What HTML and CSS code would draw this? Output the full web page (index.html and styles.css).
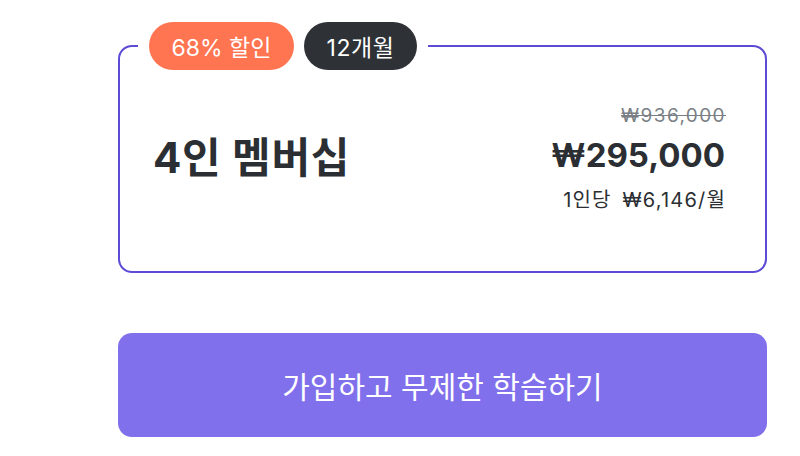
FILE: index.html
```html
<!DOCTYPE html>
<html lang="ko">
<head>
<meta charset="utf-8">
<link rel="stylesheet" href="styles.css">
</head>
<body>
<div class="wrap">
  <div class="card">
    <div class="badges">
      <span class="badge badge-sale">68% 할인</span>
      <span class="badge badge-term">12개월</span>
    </div>
    <div class="title">4인 멤버십</div>
    <div class="prices">
      <div class="orig">₩936,000</div>
      <div class="price">₩295,000</div>
      <div class="per">1인당 ₩6,146/월</div>
    </div>
  </div>
  <button class="cta">가입하고 무제한 학습하기</button>
</div>
</body>
</html>
```
FILE: styles.css
```css
html, body {
  margin: 0;
  padding: 0;
  background: #ffffff;
}
body {
  font-family: Inter, "Noto Sans CJK KR", sans-serif;
  color: #2b2f33;
}
.wrap {
  width: 649px;
  margin-left: 118px;
  padding-top: 45px;
}
.card {
  position: relative;
  box-sizing: border-box;
  height: 228px;
  border: 2px solid #5d4bd6;
  border-radius: 14px;
  display: flex;
  align-items: center;
  justify-content: space-between;
  padding: 0 40px 0 33px;
}
.badges {
  position: absolute;
  top: -25px;
  left: 18px;
  display: flex;
  gap: 10px;
  padding: 0 11px;
  background: #ffffff;
}
.badge {
  display: inline-flex;
  align-items: center;
  justify-content: center;
  height: 48px;
  border-radius: 24px;
  color: #ffffff;
  font-size: 23px;
  box-sizing: border-box;
}
.badge-sale {
  background: #ff7451;
  width: 145px;
}
.badge-term {
  background: #2e3236;
  width: 113px;
  letter-spacing: 0.6px;
}
.title {
  font-size: 42px;
  font-weight: 700;
  letter-spacing: 0.7px;
  line-height: 50px;
  margin-top: -2px;
}
.prices {
  display: flex;
  flex-direction: column;
  align-items: flex-end;
  margin-top: -1px;
}
.orig {
  font-size: 19px;
  color: #7a7f85;
  text-decoration: line-through;
  letter-spacing: 1.4px;
  margin-right: -1px;
  line-height: 24px;
}
.price {
  font-size: 33px;
  font-weight: 700;
  line-height: 44px;
  margin-top: 5px;
}
.per {
  font-size: 20px;
  line-height: 26px;
  letter-spacing: 1.2px;
  word-spacing: 4px;
  margin-right: -1px;
  margin-top: 10px;
}
.cta {
  display: block;
  width: 100%;
  height: 104px;
  margin-top: 60px;
  border: none;
  border-radius: 14px;
  background: #8170ec;
  color: #ffffff;
  font-family: Inter, "Noto Sans CJK KR", sans-serif;
  font-size: 30px;
  letter-spacing: 0;
}
```
